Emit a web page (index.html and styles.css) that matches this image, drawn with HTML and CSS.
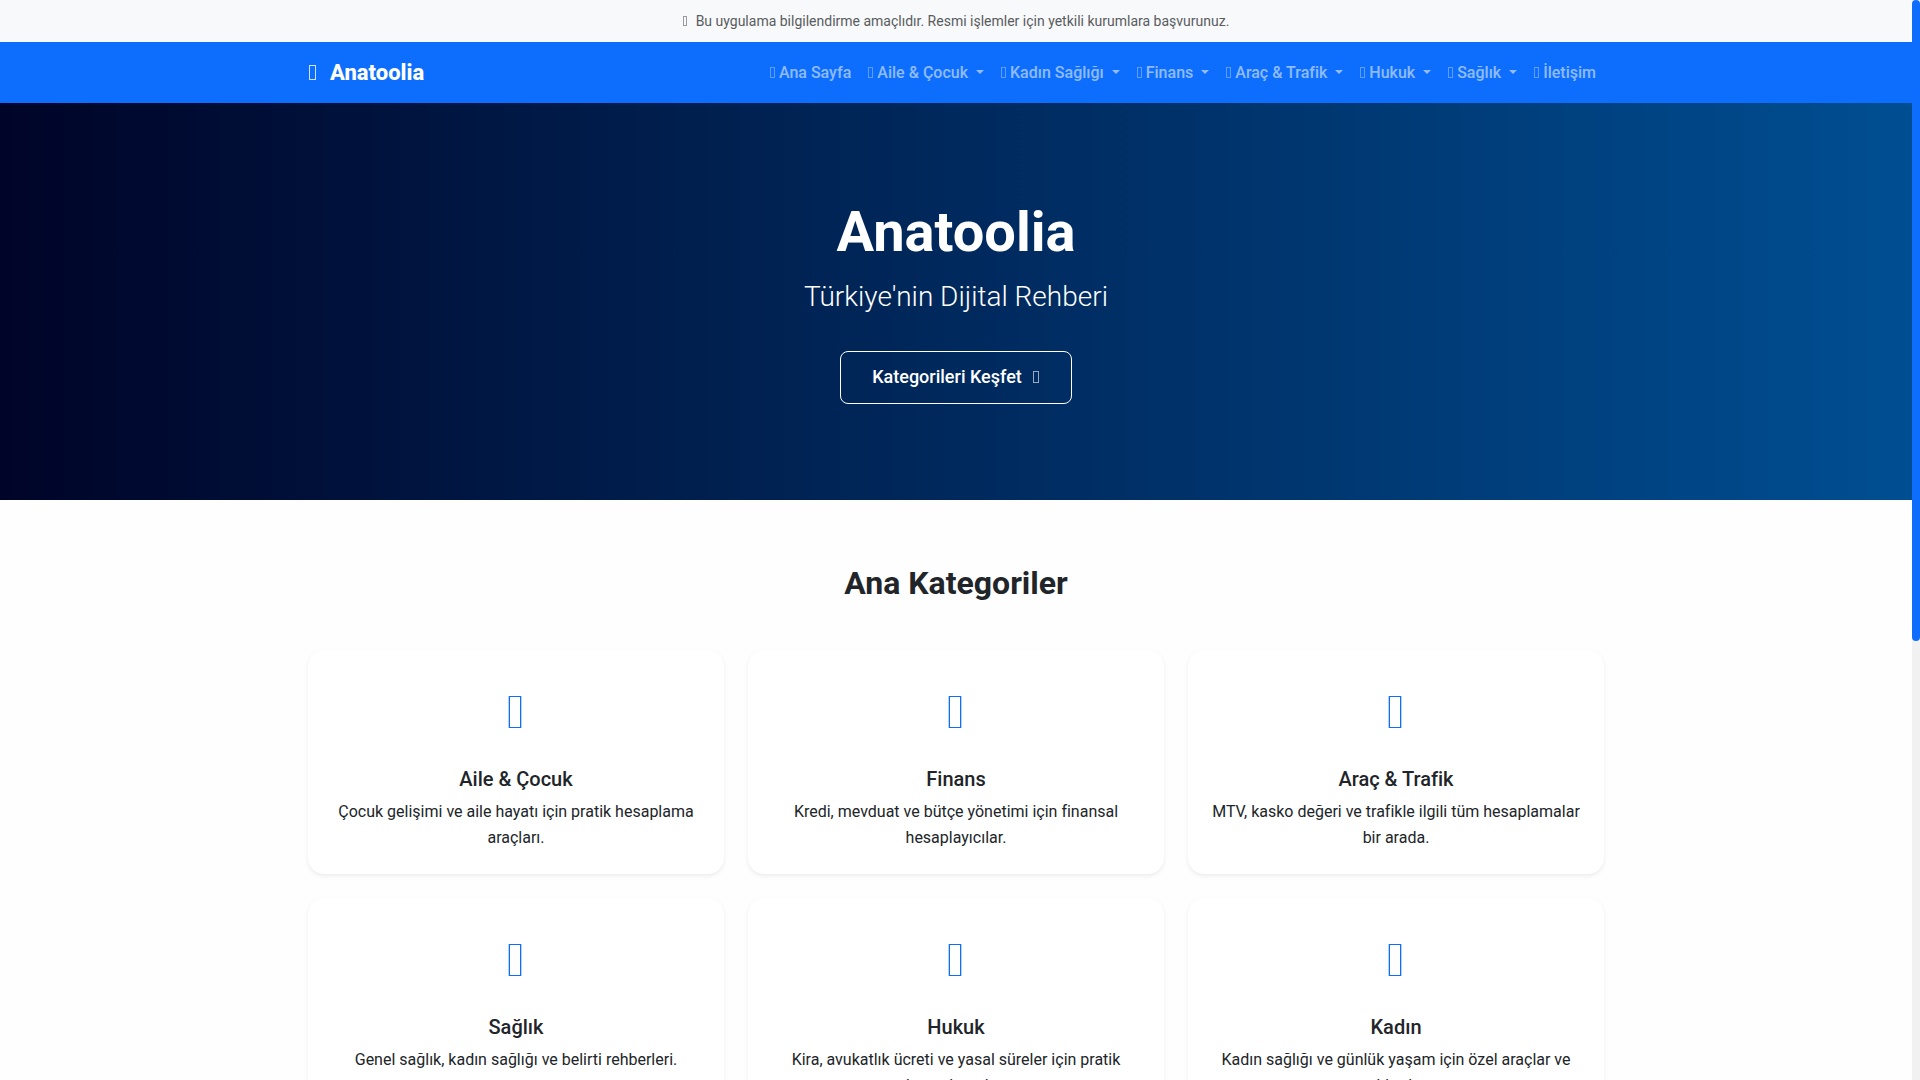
FILE: index.html
```html
<!DOCTYPE html>
<html lang="tr">
<head>
    <meta charset="UTF-8">
    <meta name="viewport" content="width=device-width, initial-scale=1.0">
    <title>Anatoolia</title>
    <link rel="stylesheet" href="styles.css">
</head>
<body>
    <div class="top-notice">
        <i class="icon"></i>Bu uygulama bilgilendirme amaçlıdır. Resmi işlemler için yetkili kurumlara başvurunuz.
    </div>

    <nav class="navbar">
        <div class="container navbar-inner">
            <a class="navbar-brand" href="#"><i class="icon"></i>Anatoolia</a>
            <ul class="navbar-nav">
                <li><a class="nav-link" href="#"><i class="icon"></i>Ana Sayfa</a></li>
                <li><a class="nav-link dropdown-toggle" href="#"><i class="icon"></i>Aile &amp; Çocuk</a></li>
                <li><a class="nav-link dropdown-toggle" href="#"><i class="icon"></i>Kadın Sağlığı</a></li>
                <li><a class="nav-link dropdown-toggle" href="#"><i class="icon"></i>Finans</a></li>
                <li><a class="nav-link dropdown-toggle" href="#"><i class="icon"></i>Araç &amp; Trafik</a></li>
                <li><a class="nav-link dropdown-toggle" href="#"><i class="icon"></i>Hukuk</a></li>
                <li><a class="nav-link dropdown-toggle" href="#"><i class="icon"></i>Sağlık</a></li>
                <li><a class="nav-link" href="#"><i class="icon"></i>İletişim</a></li>
            </ul>
        </div>
    </nav>

    <header class="hero">
        <h1>Anatoolia</h1>
        <p>Türkiye'nin Dijital Rehberi</p>
        <a class="btn-explore" href="#kategoriler">Kategorileri Keşfet<i class="icon"></i></a>
    </header>

    <main class="container categories" id="kategoriler">
        <h2>Ana Kategoriler</h2>
        <div class="card-grid">
            <a class="card" href="#">
                <div class="card-icon"><i class="icon"></i></div>
                <h5>Aile &amp; Çocuk</h5>
                <p>Çocuk gelişimi ve aile hayatı için pratik hesaplama araçları.</p>
            </a>
            <a class="card" href="#">
                <div class="card-icon"><i class="icon"></i></div>
                <h5>Finans</h5>
                <p>Kredi, mevduat ve bütçe yönetimi için finansal hesaplayıcılar.</p>
            </a>
            <a class="card" href="#">
                <div class="card-icon"><i class="icon"></i></div>
                <h5>Araç &amp; Trafik</h5>
                <p>MTV, kasko değeri ve trafikle ilgili tüm hesaplamalar bir arada.</p>
            </a>
            <a class="card" href="#">
                <div class="card-icon"><i class="icon"></i></div>
                <h5>Sağlık</h5>
                <p>Genel sağlık, kadın sağlığı ve belirti rehberleri.</p>
            </a>
            <a class="card" href="#">
                <div class="card-icon"><i class="icon"></i></div>
                <h5>Hukuk</h5>
                <p>Kira, avukatlık ücreti ve yasal süreler için pratik hesaplamalar.</p>
            </a>
            <a class="card" href="#">
                <div class="card-icon"><i class="icon"></i></div>
                <h5>Kadın</h5>
                <p>Kadın sağlığı ve günlük yaşam için özel araçlar ve rehberler.</p>
            </a>
        </div>
    </main>

    <div class="scrollbar"><div class="scrollbar-thumb"></div></div>
</body>
</html>
```

FILE: styles.css
```css
* {
    box-sizing: border-box;
}

body {
    margin: 0;
    padding-right: 8px;
    font-family: Roboto, sans-serif;
    font-size: 16px;
    line-height: 26px;
    color: #212529;
    background-color: #fefefe;
}

h1, h2, h5, p, ul {
    margin: 0;
    padding: 0;
}

a {
    color: inherit;
    text-decoration: none;
}

.container {
    max-width: 1320px;
    margin: 0 auto;
    padding: 0 12px;
}

/* Icons */
.icon {
    display: inline-block;
    width: 5px;
    height: 11px;
    margin: 0 4px 0 1px;
    border: 1px solid;
    opacity: 0.6;
}

/* Top notice */
.top-notice {
    padding: 8px 12px;
    font-size: 14px;
    text-align: center;
    color: #585c5f;
    background-color: #f8f9fa;
}

.top-notice .icon {
    width: 4px;
    height: 10px;
    margin: 0 9px 0 0;
}

/* Navbar */
.navbar {
    padding: 8px 0;
    background-color: #0d6efd;
}

.navbar-inner {
    display: flex;
    align-items: center;
    justify-content: space-between;
    min-height: 45px;
}

.navbar-brand {
    font-size: 22px;
    font-weight: 800;
    color: #fff;
}

.navbar-brand .icon {
    width: 7px;
    height: 15px;
    margin-right: 14px;
    opacity: 0.8;
}

.navbar-nav {
    display: flex;
    list-style: none;
}

.nav-link {
    display: block;
    padding: 8px;
    font-weight: 500;
    color: rgba(255, 255, 255, 0.55);
}

.nav-link:hover {
    color: #fff;
}

.dropdown-toggle::after {
    content: "";
    display: inline-block;
    margin-left: 8px;
    vertical-align: 4px;
    border-top: 4px solid;
    border-right: 4px solid transparent;
    border-left: 4px solid transparent;
}

/* Hero */
.hero {
    padding: 96px 12px;
    text-align: center;
    color: #fff;
    background: linear-gradient(to right, #000428, #004e92);
}

.hero h1 {
    margin-bottom: 8px;
    font-size: 56px;
    font-weight: 700;
    line-height: 67px;
}

.hero p {
    margin-bottom: 32px;
    font-size: 28px;
    font-weight: 300;
    line-height: 45px;
}

.btn-explore {
    display: inline-block;
    padding: 11px 31px 13px;
    border: 1px solid #fff;
    border-radius: 8px;
    font-size: 18px;
    font-weight: 500;
    line-height: 27px;
    vertical-align: top;
}

.btn-explore .icon {
    width: 6px;
    height: 12px;
    margin: 0 1px 0 11px;
}

/* Categories */
.categories {
    min-height: 1320px;
    padding-top: 64px;
    padding-bottom: 64px;
}

.categories h2 {
    margin-bottom: 48px;
    font-size: 32px;
    font-weight: 700;
    line-height: 38px;
    text-align: center;
}

.card-grid {
    display: grid;
    grid-template-columns: repeat(3, 1fr);
    gap: 24px;
}

.card {
    padding: 24px 24px 23px;
    border-radius: 16px;
    text-align: center;
    background-color: #fff;
    box-shadow: 0 2px 4px rgba(0, 0, 0, 0.075);
}

.card-icon {
    display: flex;
    align-items: center;
    justify-content: center;
    height: 77px;
    margin-bottom: 16px;
    color: #0d6efd;
}

.card-icon .icon {
    width: 12px;
    height: 32px;
    margin: 0 2px 2px 0;
    box-shadow: -1px 0 rgba(13, 110, 253, 0.3), 1px 0 rgba(13, 110, 253, 0.3);
    opacity: 1;
}

.card h5 {
    margin-bottom: 8px;
    font-size: 20px;
    font-weight: 500;
    line-height: 24px;
}

/* Page scrollbar */
.scrollbar {
    position: fixed;
    top: 0;
    right: 0;
    bottom: 0;
    width: 8px;
    background-color: #f1f1f1;
}

.scrollbar-thumb {
    height: 641px;
    border-radius: 4px;
    background-color: #0d6efd;
}
```
